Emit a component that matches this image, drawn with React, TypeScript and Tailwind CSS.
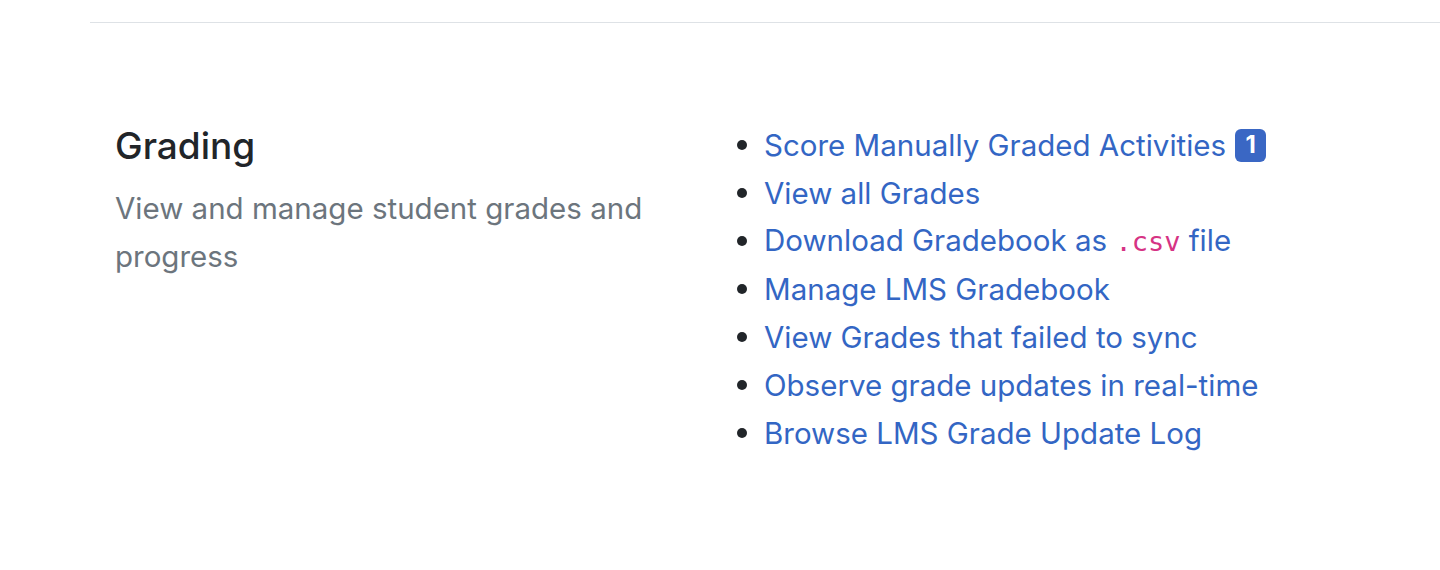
const links = [
  "Score Manually Graded Activities",
  "View all Grades",
  "Download Gradebook as",
  "Manage LMS Gradebook",
  "View Grades that failed to sync",
  "Observe grade updates in real-time",
  "Browse LMS Grade Update Log",
];

function Item({ index, label }: { index: number; label: string }) {
  return (
    <li className="flex h-[48px] items-center">
      <span className="mr-[17px] ml-[12px] h-[10px] w-[10px] rounded-full bg-[#212529]" />
      <a href="#" className="text-[#3366c4]">
        {label}
        {index === 2 && (
          <>
            {" "}
            <code className="font-['DejaVu_Sans_Mono',monospace] text-[27px] text-[#d63384]">.csv</code> file
          </>
        )}
      </a>
      {index === 0 && (
        <span className="ml-[9px] inline-flex h-[33px] w-[31px] items-center justify-center rounded-[6px] bg-[#3a67c4] text-[24px] font-bold text-white">
          1
        </span>
      )}
    </li>
  );
}

export default function App() {
  return (
    <div className="min-h-[570px] bg-white font-['Inter',sans-serif]">
      <div className="ml-[90px] pt-[22px]">
        <div className="border-t border-[#dee2e6]" />
        <div className="flex pt-[98px] pl-[25px]">
          <div className="w-[610px]">
            <h2 className="text-[37px] leading-[50px] font-medium text-[#212529]">Grading</h2>
            <p className="mt-[13px] w-[540px] text-[29.5px] leading-[48px] text-[#6c757d]">
              View and manage student grades and progress
            </p>
          </div>
          <ul className="text-[29.5px] leading-[48px]">
            {links.map((l, i) => (
              <Item key={l} index={i} label={l} />
            ))}
          </ul>
        </div>
      </div>
    </div>
  );
}
